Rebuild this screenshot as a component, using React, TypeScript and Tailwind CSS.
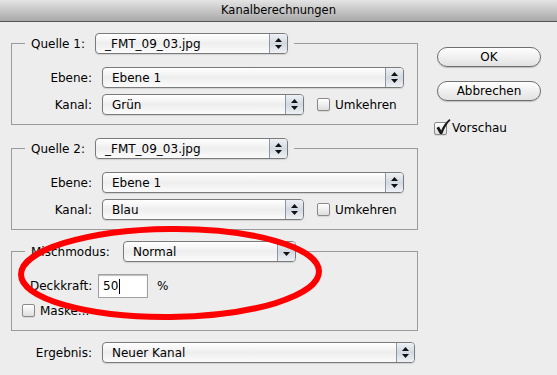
import React from 'react';

function Arrows({ single }: { single?: boolean }) {
  return (
    <div
      className={`ml-auto flex h-full w-[18px] flex-col items-center rounded-r-[3px] border-l border-[#8f96a3] bg-gradient-to-b from-[#eef1f5] via-[#d3d9e2] to-[#eef1f5] ${
        single ? 'justify-end pb-[5px]' : 'justify-center gap-[3px]'
      }`}
    >
      {!single && (
        <svg width="7" height="4" viewBox="0 0 7 4">
          <path d="M3.5 0 L7 4 L0 4 Z" fill="#111" />
        </svg>
      )}
      <svg width="7" height="4" viewBox="0 0 7 4">
        <path d="M0 0 L7 0 L3.5 4 Z" fill="#111" />
      </svg>
    </div>
  );
}

function Popup({ value, className, single }: { value: string; className: string; single?: boolean }) {
  return (
    <div
      className={`flex h-[21px] items-center rounded-[4px] border border-[#7a7a7a] bg-gradient-to-b from-white via-[#eeeeee] to-[#fbfbfb] shadow-[0_1px_1px_rgba(0,0,0,0.12)] ${className}`}
    >
      <span className="pl-[9px] leading-none">{value}</span>
      <Arrows single={single} />
    </div>
  );
}

function Check({ checked }: { checked?: boolean }) {
  return (
    <div className="relative h-[13px] w-[13px] shrink-0 rounded-[2px] border border-[#8a8a8a] bg-gradient-to-b from-white to-[#dedede] shadow-[0_1px_1px_rgba(0,0,0,0.1)]">
      {checked && (
        <svg className="absolute -top-[4px] left-[0px]" width="16" height="17" viewBox="0 0 16 17">
          <path d="M1.5 9 L4 7.5 L6.2 11.5 C8 7 10.5 3 14.5 0 L15.5 1.2 C11.5 5 9.2 10 7.2 15 L5 15 Z" fill="#1a1a1a" />
        </svg>
      )}
    </div>
  );
}

function Button({ label }: { label: string }) {
  return (
    <div className="flex h-[20px] w-[104px] items-center justify-center rounded-full border border-[#707070] bg-gradient-to-b from-white via-[#f0f0f0] to-[#e2e2e2] shadow-[0_1px_1px_rgba(0,0,0,0.2)]">
      {label}
    </div>
  );
}

function SourceGroup({ n, kanal }: { n: number; kanal: string }) {
  return (
    <fieldset className="w-[407px] border border-[#9b9b9b] pl-[13px] pt-[13px] pb-[9px]">
      <legend className="ml-0 flex items-center px-[6px]">
        <span className="w-[64px]">Quelle {n}:</span>
        <Popup value="_FMT_09_03.jpg" className="w-[193px]" />
      </legend>
      <div className="flex flex-col gap-[6px]">
        <div className="flex items-center">
          <span className="w-[67px] text-right">Ebene:</span>
          <Popup value="Ebene 1" className="ml-[10px] w-[302px]" />
        </div>
        <div className="flex items-center">
          <span className="w-[67px] text-right">Kanal:</span>
          <Popup value={kanal} className="ml-[10px] w-[202px]" />
          <div className="ml-[13px]">
            <Check />
          </div>
          <span className="ml-[5px]">Umkehren</span>
        </div>
      </div>
    </fieldset>
  );
}

export default function App() {
  return (
    <div className="relative h-[375px] w-[557px] overflow-hidden bg-[#ededed] font-['DejaVu_Sans',sans-serif] text-[12px] text-black">
      {/* Title bar */}
      <div className="flex h-[22px] items-center justify-center border-b border-[#555] bg-gradient-to-b from-[#e4e4e4] to-[#a9a9a9] text-[11.5px]">
        Kanalberechnungen
      </div>

      <div className="flex pl-[11px] pt-[11px]">
        {/* Left column */}
        <div className="flex w-[407px] flex-col">
          <SourceGroup n={1} kanal="Grün" />
          <div className="mt-[13px]">
            <SourceGroup n={2} kanal="Blau" />
          </div>

          <fieldset className="mt-[11px] w-[407px] border border-[#9b9b9b] pl-[10px] pt-[12px] pb-[13px]">
            <legend className="ml-[3px] flex items-center pl-[6px] pr-[4px]">
              <span className="w-[81px]">Mischmodus:</span>
              <Popup value="Normal" className="ml-[11px] w-[173px]" single />
            </legend>
            <div className="flex h-[24px] items-center pl-[8px]">
              <span className="w-[68px]">Deckkraft:</span>
              <div className="flex h-[24px] w-[50px] items-center border border-[#a0a0a0] bg-white pl-[4px] shadow-[inset_0_1px_1px_rgba(0,0,0,0.25)]">
                <span>50</span>
                <span className="ml-[1px] h-[15px] w-[1px] bg-black" />
              </div>
              <span className="ml-[9px]">%</span>
            </div>
            <div className="mt-[6px] flex h-[13px] items-center">
              <Check />
              <span className="ml-[5px]">Maske...</span>
            </div>
          </fieldset>

          <div className="mt-[11px] flex items-center">
            <span className="w-[81px] text-right">Ergebnis:</span>
            <Popup value="Neuer Kanal" className="ml-[10px] w-[313px]" />
          </div>
        </div>

        {/* Right column */}
        <div className="ml-[19px] flex w-[104px] flex-col pt-[14px]">
          <Button label="OK" />
          <div className="mt-[14px]">
            <Button label="Abbrechen" />
          </div>
          <div className="-ml-[3px] mt-[18px] flex items-center">
            <Check checked />
            <span className="ml-[5px]">Vorschau</span>
          </div>
        </div>
      </div>

      {/* Red annotation ellipse */}
      <svg className="pointer-events-none absolute left-0 top-0" width="557" height="375" viewBox="0 0 557 375">
        <ellipse cx="170" cy="273" rx="149" ry="44" fill="none" stroke="#f00" strokeWidth="6" transform="rotate(-0.6 170 273)" />
      </svg>
    </div>
  );
}
